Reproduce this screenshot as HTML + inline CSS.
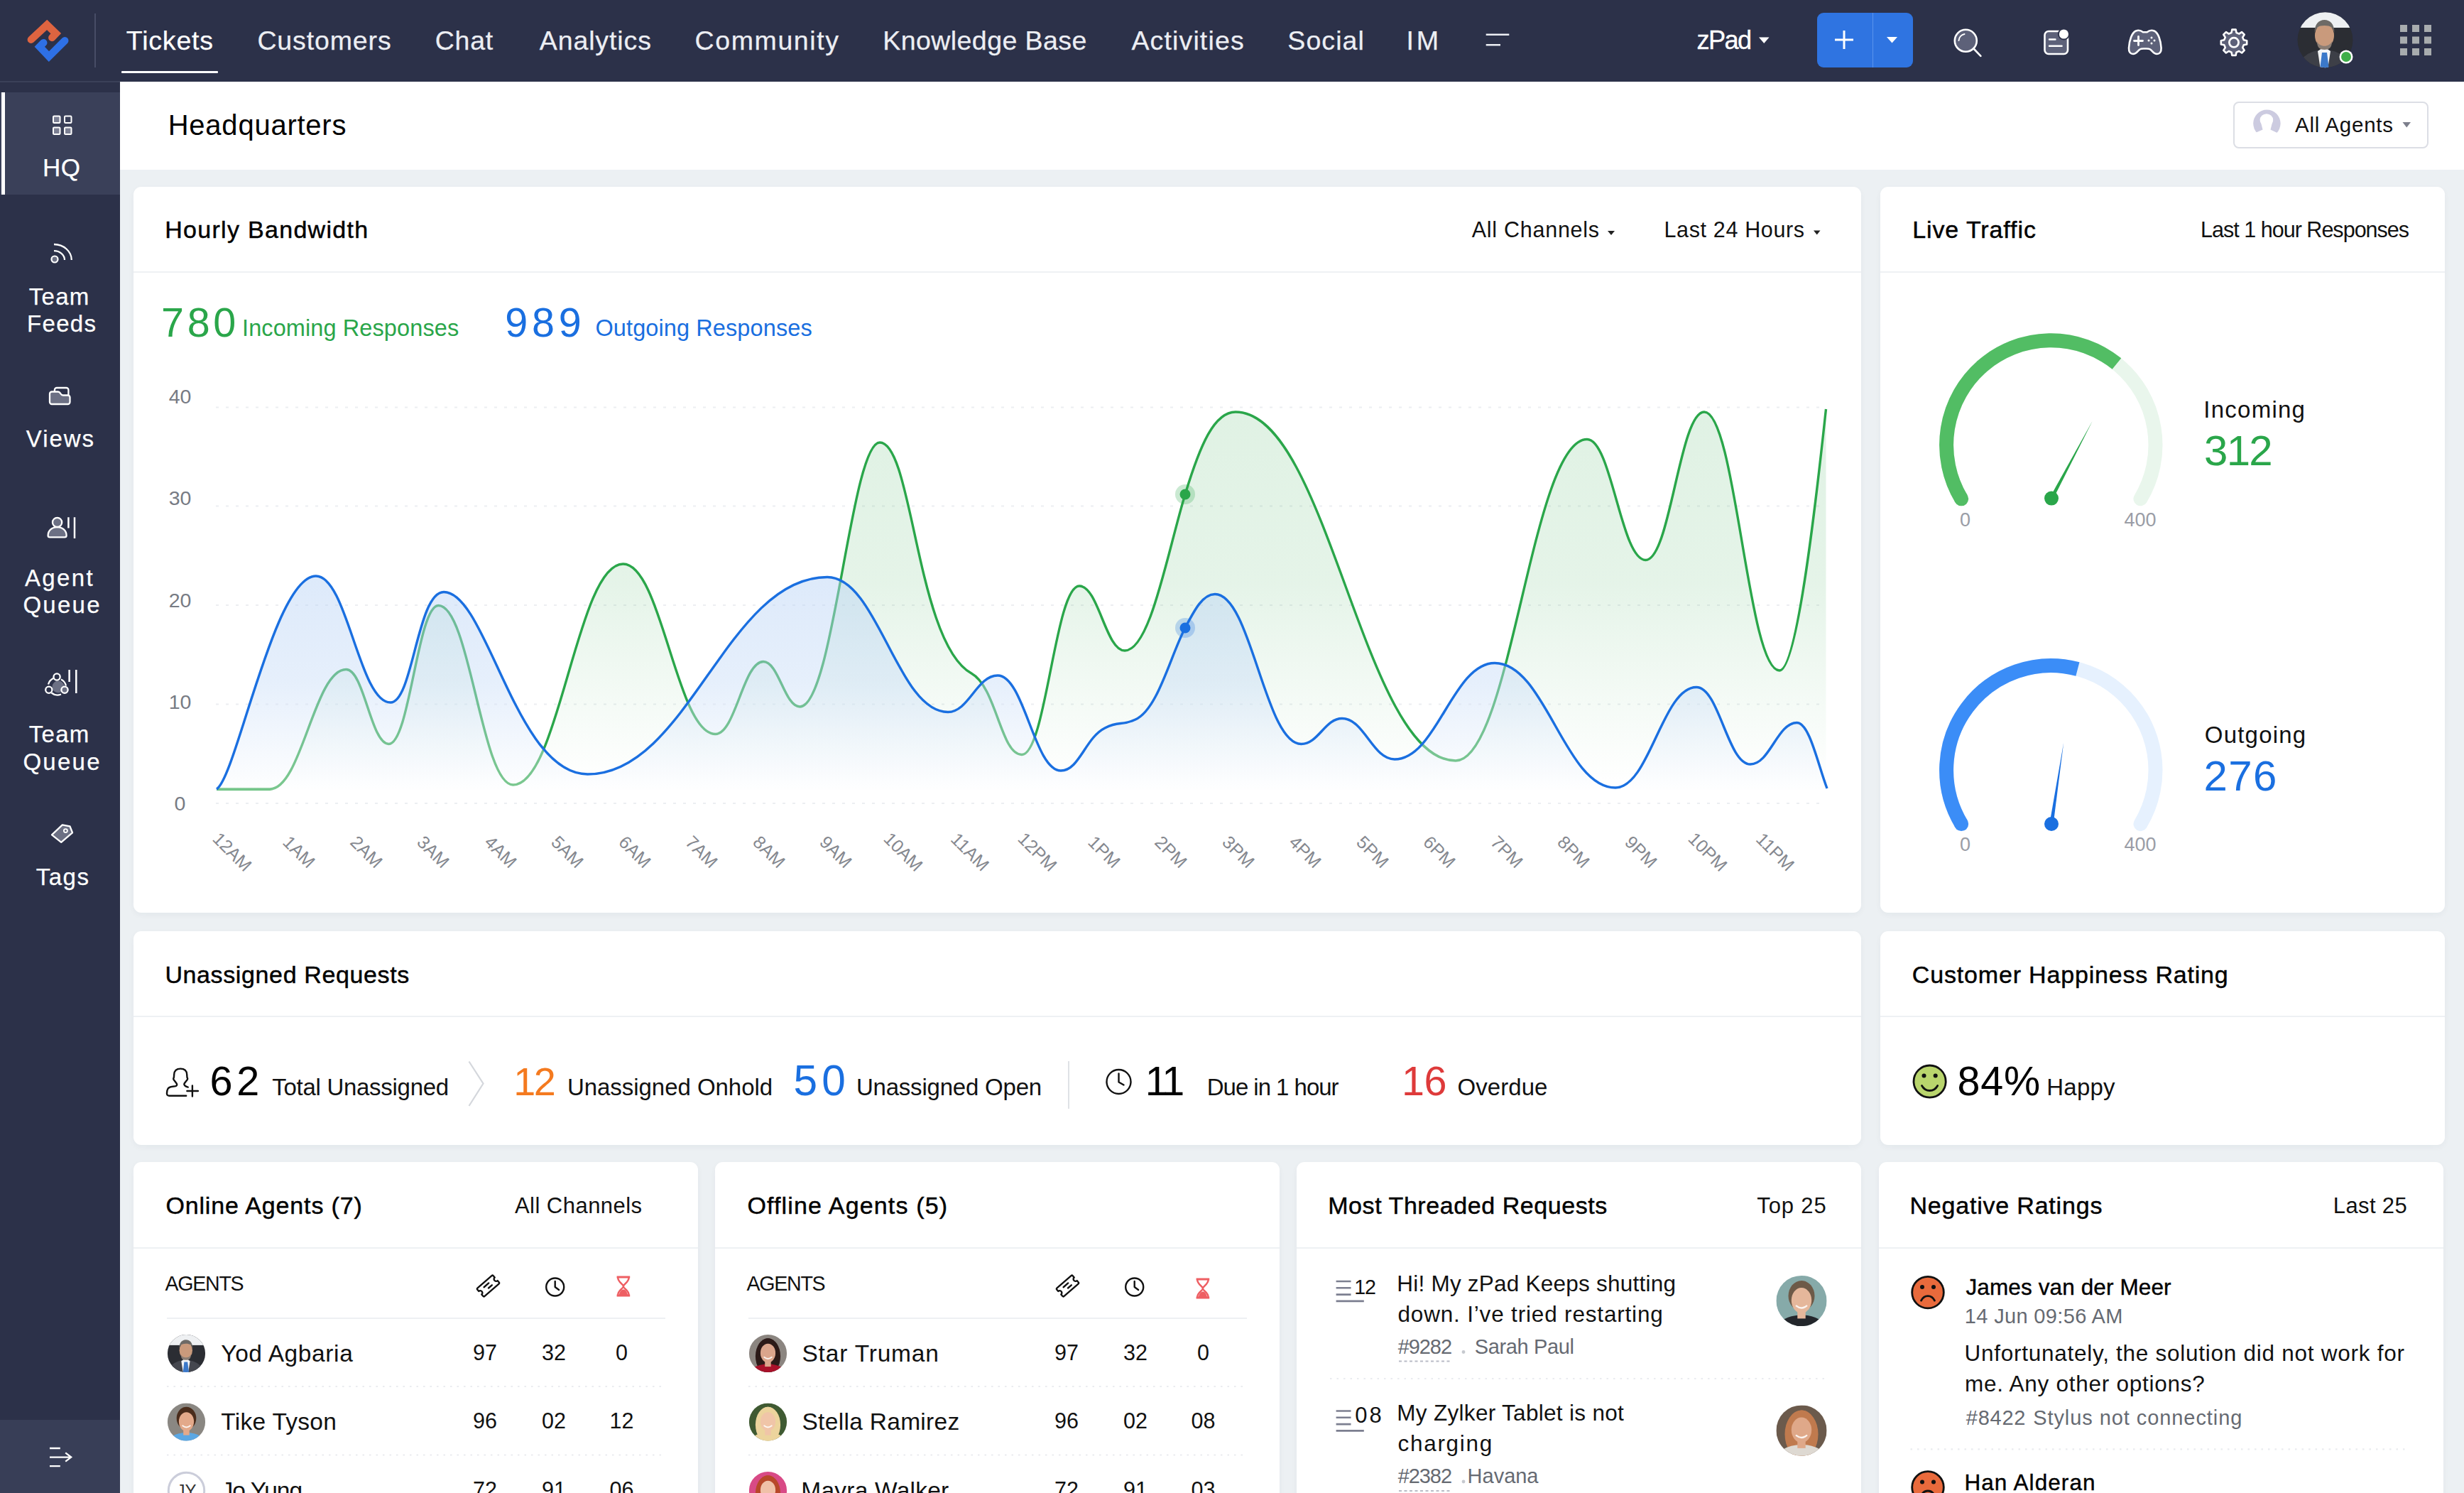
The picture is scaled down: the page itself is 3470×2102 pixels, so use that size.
<!DOCTYPE html>
<html lang="en"><head><meta charset="utf-8"><title>Headquarters</title>
<style>
html,body{margin:0;padding:0;}
body{width:3470px;height:2102px;background:#ecf0f3;position:relative;font-family:"Liberation Sans",sans-serif;}
#page{position:absolute;left:0;top:0;width:3470px;height:2102px;overflow:hidden;}
#page>div{position:absolute;}
.t{position:absolute;white-space:nowrap;line-height:1;}
svg.ov{position:absolute;left:0;top:0;}
</style></head><body><div id="page">
<div style="left:0px;top:0px;width:3470px;height:115px;background:#2c3149;"></div>
<div style="left:0px;top:115px;width:169px;height:1987px;background:#2c3149;"></div>
<div style="left:0px;top:113.5px;width:169px;height:2px;background:#3b4159;"></div>
<div style="left:0px;top:130px;width:169px;height:144px;background:#3a4059;"></div>
<div style="left:2px;top:130px;width:5px;height:144px;background:#fff;"></div>
<div style="left:0px;top:1999px;width:169px;height:103px;background:#383e57;"></div>
<div style="left:169px;top:115px;width:3301px;height:124px;background:#fff;"></div>
<div style="left:188px;top:263px;width:2433px;height:1022px;background:#fff;border-radius:11px;box-shadow:0 3px 8px rgba(30,40,60,0.045);"></div>
<div style="left:2648px;top:263px;width:795px;height:1022px;background:#fff;border-radius:11px;box-shadow:0 3px 8px rgba(30,40,60,0.045);"></div>
<div style="left:188px;top:1311px;width:2433px;height:301px;background:#fff;border-radius:11px;box-shadow:0 3px 8px rgba(30,40,60,0.045);"></div>
<div style="left:2648px;top:1311px;width:795px;height:301px;background:#fff;border-radius:11px;box-shadow:0 3px 8px rgba(30,40,60,0.045);"></div>
<div style="left:188px;top:1636px;width:795px;height:520px;background:#fff;border-radius:11px;box-shadow:0 3px 8px rgba(30,40,60,0.045);"></div>
<div style="left:1007px;top:1636px;width:795px;height:520px;background:#fff;border-radius:11px;box-shadow:0 3px 8px rgba(30,40,60,0.045);"></div>
<div style="left:1826px;top:1636px;width:795px;height:520px;background:#fff;border-radius:11px;box-shadow:0 3px 8px rgba(30,40,60,0.045);"></div>
<div style="left:2646px;top:1636px;width:795px;height:520px;background:#fff;border-radius:11px;box-shadow:0 3px 8px rgba(30,40,60,0.045);"></div>
<div style="left:188px;top:382px;width:2433px;height:2px;background:#eef1f4;"></div>
<div style="left:2648px;top:382px;width:795px;height:2px;background:#eef1f4;"></div>
<div style="left:188px;top:1430px;width:2433px;height:2px;background:#eef1f4;"></div>
<div style="left:2648px;top:1430px;width:795px;height:2px;background:#eef1f4;"></div>
<div style="left:188px;top:1756px;width:795px;height:2px;background:#eef1f4;"></div>
<div style="left:1007px;top:1756px;width:795px;height:2px;background:#eef1f4;"></div>
<div style="left:1826px;top:1756px;width:795px;height:2px;background:#eef1f4;"></div>
<div style="left:2646px;top:1756px;width:795px;height:2px;background:#eef1f4;"></div>
<div style="left:133px;top:19px;width:2px;height:76px;background:#474d66;"></div>
<div style="left:171px;top:100px;width:136px;height:3px;background:#fff;border-radius:1px;"></div>
<div style="left:2559px;top:18px;width:135px;height:77px;background:#2f74e1;border-radius:9px;"></div>
<div style="left:2636.5px;top:18px;width:1.5px;height:77px;background:#5a93ec;"></div>
<div style="left:3145px;top:142.5px;width:275px;height:66px;border:2px solid #dcdee5;border-radius:8px;box-sizing:border-box;background:#fff;"></div>
<div style="left:1504px;top:1494px;width:2px;height:67px;background:#dfe2e6;"></div>
<div style="left:235px;top:1855.3px;width:702px;height:2px;background:#eef0f3;"></div>
<div style="left:1054px;top:1855.3px;width:702px;height:2px;background:#eef0f3;"></div>
<svg class="ov" width="3470" height="2102" viewBox="0 0 3470 2102">
<g fill="none" stroke-linejoin="miter" stroke-linecap="round" stroke-width="10.4"><path d="M43.8 55.8 L66.2 35 L78.8 47.2 L73.3 53" stroke="#de6440"/><path d="M91.3 57.2 L68.9 79.6 L55.8 65.8 L61.3 60.2" stroke="#2e70e6"/></g>
<path d="M2092.7 48.7H2125.3M2092.7 63.3H2113" stroke="#eceef3" stroke-width="2.6" fill="none"/>
<path d="M2477 52.5h14.5l-7.25 8.5z" fill="#fff"/>
<path d="M2584 56H2610M2597 43V69" stroke="#fff" stroke-width="3" fill="none"/>
<path d="M2657 52h15l-7.5 8.6z" fill="#fff"/>
<circle cx="2768.3" cy="57.3" r="15.5" fill="#5d6179" stroke="#fff" stroke-width="2.6"/><path d="M2779.5 68.5L2789.4 78.8" stroke="#fff" stroke-width="2.6" stroke-linecap="round"/><path d="M2758.5 57a10 10 0 0 1 8-9" stroke="#fff" stroke-width="2" fill="none" stroke-linecap="round"/>
<rect x="2879.5" y="44" width="32.5" height="32" rx="5.5" fill="#5d6179" stroke="#fff" stroke-width="2.6"/><path d="M2886 55.5H2894.5M2886 64.8H2903.6" stroke="#fff" stroke-width="2.4" stroke-linecap="round"/><circle cx="2906.4" cy="48" r="8.5" fill="#2c3149"/><circle cx="2906.4" cy="48" r="6.6" fill="#fff"/>
<path d="M3008 43.5c4-1.6 8 .2 10 1.800h5.600c2-1.600 6-3.400 10-1.800 6 2.500 9.500 14 10 24 .3 6-2.500 8.500-6 8.500-4.500 0-6.500-4.500-9.500-6.500-2-1.300-4-1-7.300-1s-5.300-.3-7.300 1c-3 2-5 6.500-9.500 6.500-3.500 0-6.300-2.500-6-8.500.5-10 4-21.500 10-24z" fill="#5d6179" stroke="#fff" stroke-width="2.6" stroke-linejoin="round"/><path d="M3005.500 57.500h12M3011.500 51.500v12" stroke="#fff" stroke-width="2.8" stroke-linecap="round"/><circle cx="3030" cy="53" r="1.500" fill="#fff"/><circle cx="3030" cy="61" r="1.500" fill="#fff"/><circle cx="3026" cy="57" r="1.500" fill="#fff"/><circle cx="3034" cy="57" r="1.500" fill="#fff"/>
<path d="M3142.5 46.0 L3143.4 41.6 L3148.6 41.6 L3149.5 46.0 L3153.2 47.6 L3157.1 45.1 L3160.7 48.7 L3158.2 52.6 L3159.8 56.3 L3164.2 57.2 L3164.2 62.4 L3159.8 63.3 L3158.2 67.0 L3160.7 70.9 L3157.1 74.5 L3153.2 72.0 L3149.5 73.6 L3148.6 78.0 L3143.4 78.0 L3142.5 73.6 L3138.8 72.0 L3134.9 74.5 L3131.3 70.9 L3133.8 67.0 L3132.2 63.3 L3127.8 62.4 L3127.8 57.2 L3132.2 56.3 L3133.8 52.6 L3131.3 48.7 L3134.9 45.1 L3138.8 47.6Z" fill="#5d6179" stroke="#fff" stroke-width="2.6" stroke-linejoin="round"/><circle cx="3146" cy="59.8" r="6.6" fill="#5d6179" stroke="#fff" stroke-width="2.8"/>
<defs><clipPath id="cpn"><circle cx="3274.5" cy="56.3" r="39"/></clipPath></defs><g clip-path="url(#cpn)"><rect x="3235" y="17" width="80" height="80" fill="#2b2d33"/><rect x="3235" y="17" width="80" height="22" fill="#eef0f2"/><ellipse cx="3273" cy="104" rx="40" ry="34" fill="#3d3f47"/><path d="M3264 72l9 -6 9 6 -4 26h-10z" fill="#f3f4f6"/><path d="M3270 74h7l3 24h-13z" fill="#3b78c9"/><ellipse cx="3273.5" cy="50" rx="13.5" ry="17" fill="#c99a7c"/><path d="M3259.500 46c0-12 6-18 14-18s14 6 14 18c-2-7-5-10-14-10s-12 3-14 10z" fill="#6d6a66"/><path d="M3263 58c3 9 18 9 21 0 0 9-4 12-10.500 12s-10.500-3-10.500-12z" fill="#8a7d74"/></g><circle cx="3304" cy="80" r="9.500" fill="#fff"/><circle cx="3304" cy="80" r="7" fill="#3fae49"/>
<rect x="3380" y="35.0" width="10" height="10" fill="#a8acae"/>
<rect x="3397" y="35.0" width="10" height="10" fill="#a8acae"/>
<rect x="3414" y="35.0" width="10" height="10" fill="#a8acae"/>
<rect x="3380" y="51.5" width="10" height="10" fill="#a8acae"/>
<rect x="3397" y="51.5" width="10" height="10" fill="#a8acae"/>
<rect x="3414" y="51.5" width="10" height="10" fill="#a8acae"/>
<rect x="3380" y="68.0" width="10" height="10" fill="#a8acae"/>
<rect x="3397" y="68.0" width="10" height="10" fill="#a8acae"/>
<rect x="3414" y="68.0" width="10" height="10" fill="#a8acae"/>
<rect x="75" y="163.5" width="9.500" height="9.500" rx="1.200" fill="#7b7f93" stroke="#fff" stroke-width="2"/>
<rect x="91" y="163.5" width="9.500" height="9.500" rx="1.200" fill="none" stroke="#fff" stroke-width="2"/>
<rect x="75" y="179.5" width="9.500" height="9.500" rx="1.200" fill="#7b7f93" stroke="#fff" stroke-width="2"/>
<rect x="91" y="179.5" width="9.500" height="9.500" rx="1.200" fill="#7b7f93" stroke="#fff" stroke-width="2"/>
<circle cx="77" cy="365" r="4.500" fill="#6c7084" stroke="#fff" stroke-width="2.200"/><path d="M76 353.200A15 13 0 0 1 91 366M76 344A25 22 0 0 1 100.800 366" fill="none" stroke="#fff" stroke-width="2.300"/>
<path d="M76.900 551.500V549a3 3 0 0 1 3-3h13.500a3 3 0 0 1 3 3v7.300" fill="none" stroke="#fff" stroke-width="2.300"/><path d="M70 554.500a3 3 0 0 1 3-3h8.500c1.500 0 2.200.6 3.200 1.800l1 1.400c1 1.200 1.700 1.800 3.200 1.800h6.600a3 3 0 0 1 3 3v6.500a3 3 0 0 1-3 3H73a3 3 0 0 1-3-3z" fill="#6c7084" stroke="#fff" stroke-width="2.300" stroke-linejoin="round"/>
<path d="M67.600 754c0-7 5.500-11.800 13-11.800s13 4.800 13 11.800c0 1.700-1.200 2.400-2.600 2.400H70.200c-1.400 0-2.600-.7-2.600-2.400z" fill="#6c7084" stroke="#fff" stroke-width="2.300"/><circle cx="80.600" cy="735.400" r="6.600" fill="#6c7084" stroke="#fff" stroke-width="2.300"/><path d="M96.400 728.300V743.600M105 728.300V758" stroke="#fff" stroke-width="2.500" fill="none"/>
<circle cx="82" cy="967" r="8.500" fill="#6c7084"/><path d="M68 963.500A13.500 13.500 0 0 1 75.500 954.800M86 956.500A13.500 13.500 0 0 1 93 965.500M72.500 975.500A13.500 13.500 0 0 0 86 977.500" fill="none" stroke="#fff" stroke-width="2.300"/><circle cx="80.100" cy="953" r="4.600" fill="#2c3149" stroke="#fff" stroke-width="2.300"/><circle cx="68.800" cy="971.300" r="4.600" fill="#2c3149" stroke="#fff" stroke-width="2.300"/><circle cx="91" cy="971.300" r="4.600" fill="#6c7084" stroke="#fff" stroke-width="2.300"/><path d="M97.600 943V960M107.300 943V976" stroke="#fff" stroke-width="2.500" fill="none"/>
<path d="M87.800 1161.300L98.400 1163.300L102 1172.300L86.200 1185.800L73 1175.300Z" fill="#6c7084" stroke="#fff" stroke-width="2.300" stroke-linejoin="round"/><circle cx="92.400" cy="1169.600" r="2.500" fill="#6c7084" stroke="#fff" stroke-width="1.900"/>
<path d="M70 2039H84.800M70 2051.600H99.500M70 2064.200H84.800M92.200 2045.400L100.200 2051.600L92.200 2057.700" stroke="#fff" stroke-width="2.300" fill="none"/>
<circle cx="3192.400" cy="173.800" r="19.200" fill="#cccbe0"/><ellipse cx="3191.900" cy="169" rx="9.300" ry="8.800" fill="#fff"/><path d="M3183.600 171L3200.400 171L3197.400 183.100H3186.600Z" fill="#fff"/><path d="M3186.600 182.600H3197.400L3209.500 188.300V196H3175V187.400Z" fill="#fff"/>
<path d="M3383.500 172h11.500l-5.750 7.500z" fill="#7c7f8c"/>
<path d="M2264 325h10l-5 6z" fill="#222"/>
<path d="M2554 324.500h9.500l-4.750 6z" fill="#222"/>
<path d="M304 573.5H2572" stroke="#eceef1" stroke-width="2" stroke-dasharray="4 10" fill="none"/>
<path d="M304 712.5H2572" stroke="#eceef1" stroke-width="2" stroke-dasharray="4 10" fill="none"/>
<path d="M304 852H2572" stroke="#eceef1" stroke-width="2" stroke-dasharray="4 10" fill="none"/>
<path d="M304 991.5H2572" stroke="#eceef1" stroke-width="2" stroke-dasharray="4 10" fill="none"/>
<path d="M304 1131H2572" stroke="#eceef1" stroke-width="2" stroke-dasharray="4 10" fill="none"/>
<defs><linearGradient id="gg" x1="0" y1="0" x2="0" y2="1" gradientUnits="userSpaceOnUse" gradientTransform="translate(0 570) scale(1 560)"><stop offset="0" stop-color="#2fa64a" stop-opacity="0.15"/><stop offset="0.45" stop-color="#2fa64a" stop-opacity="0.125"/><stop offset="0.95" stop-color="#2fa64a" stop-opacity="0"/></linearGradient><linearGradient id="gb" x1="0" y1="0" x2="0" y2="1" gradientUnits="userSpaceOnUse" gradientTransform="translate(0 800) scale(1 320)"><stop offset="0" stop-color="#1a6fe0" stop-opacity="0.15"/><stop offset="0.5" stop-color="#1a6fe0" stop-opacity="0.11"/><stop offset="1" stop-color="#1a6fe0" stop-opacity="0"/></linearGradient></defs>
<path d="M305.0 1111.0 C336.5 1111.0 348.5 1111.0 380.0 1111.0 C425.1 1111.0 442.4 942.5 487.5 942.5 C512.7 942.5 522.3 1047.5 547.5 1047.5 C576.9 1047.5 588.1 852.5 617.5 852.5 C661.6 852.5 678.4 1105.0 722.5 1105.0 C787.6 1105.0 812.4 794.0 877.5 794.0 C932.1 794.0 952.9 1033.5 1007.5 1033.5 C1035.8 1033.5 1046.7 931.5 1075.0 931.5 C1096.6 931.5 1104.9 995.0 1126.5 995.0 C1173.8 995.0 1198.5 623.0 1239.0 623.0 C1285.4 623.0 1290.6 905.4 1368.0 948.0 C1403.5 967.5 1409.2 1062.5 1439.0 1062.5 C1473.0 1062.5 1486.0 825.0 1520.0 825.0 C1546.9 825.0 1557.1 916.0 1584.0 916.0 C1619.7 916.0 1643.5 780.1 1669.0 696.0 C1690.3 625.7 1710.2 580.0 1740.0 580.0 C1870.2 580.0 1919.8 1071.0 2050.0 1071.0 C2127.7 1071.0 2157.3 618.5 2235.0 618.5 C2269.7 618.5 2282.8 788.5 2317.5 788.5 C2352.2 788.5 2365.3 580.0 2400.0 580.0 C2444.5 580.0 2461.5 944.0 2506.0 944.0 C2533.5 944.0 2563.6 646.7 2571.5 576.0 L2571.500 1112 L305 1112Z" fill="url(#gg)"/>
<path d="M305.0 1111.0 C336.5 1111.0 348.5 1111.0 380.0 1111.0 C425.1 1111.0 442.4 942.5 487.5 942.5 C512.7 942.5 522.3 1047.5 547.5 1047.5 C576.9 1047.5 588.1 852.5 617.5 852.5 C661.6 852.5 678.4 1105.0 722.5 1105.0 C787.6 1105.0 812.4 794.0 877.5 794.0 C932.1 794.0 952.9 1033.5 1007.5 1033.5 C1035.8 1033.5 1046.7 931.5 1075.0 931.5 C1096.6 931.5 1104.9 995.0 1126.5 995.0 C1173.8 995.0 1198.5 623.0 1239.0 623.0 C1285.4 623.0 1290.6 905.4 1368.0 948.0 C1403.5 967.5 1409.2 1062.5 1439.0 1062.5 C1473.0 1062.5 1486.0 825.0 1520.0 825.0 C1546.9 825.0 1557.1 916.0 1584.0 916.0 C1619.7 916.0 1643.5 780.1 1669.0 696.0 C1690.3 625.7 1710.2 580.0 1740.0 580.0 C1870.2 580.0 1919.8 1071.0 2050.0 1071.0 C2127.7 1071.0 2157.3 618.5 2235.0 618.5 C2269.7 618.5 2282.8 788.5 2317.5 788.5 C2352.2 788.5 2365.3 580.0 2400.0 580.0 C2444.5 580.0 2461.5 944.0 2506.0 944.0 C2533.5 944.0 2563.6 646.7 2571.5 576.0" fill="none" stroke="#2aa64a" stroke-width="3.400" stroke-linejoin="round"/>
<path d="M305.0 1111.0 C333.0 1094.2 386.2 811.0 445.0 811.0 C489.1 811.0 505.9 989.0 550.0 989.0 C581.5 989.0 587.5 833.5 625.0 833.5 C685.8 833.5 726.2 1090.0 827.5 1090.0 C969.2 1090.0 1023.2 812.5 1165.0 812.5 C1236.4 812.5 1263.6 1002.5 1335.0 1002.5 C1364.4 1002.5 1375.6 951.0 1405.0 951.0 C1442.4 951.0 1456.6 1085.0 1494.0 1085.0 C1520.0 1085.0 1528.1 1039.0 1556.0 1025.0 C1577.5 1014.2 1577.5 1022.7 1599.0 1013.0 C1630.5 998.8 1648.0 923.9 1669.0 884.0 C1681.6 860.1 1693.4 836.5 1711.0 836.5 C1762.0 836.5 1781.5 1047.5 1832.5 1047.5 C1856.7 1047.5 1865.8 1011.5 1890.0 1011.5 C1921.1 1011.5 1932.9 1069.0 1964.0 1069.0 C2023.2 1069.0 2045.8 933.5 2105.0 933.5 C2176.4 933.5 2203.6 1109.0 2275.0 1109.0 C2322.9 1109.0 2341.1 967.5 2389.0 967.5 C2420.9 967.5 2433.1 1076.0 2465.0 1076.0 C2492.5 1076.0 2503.0 1017.5 2530.5 1017.5 C2548.3 1017.5 2560.2 1076.8 2573.0 1110.0 L2573 1112 L305 1112Z" fill="#fff" fill-opacity="0.38"/>
<path d="M305.0 1111.0 C333.0 1094.2 386.2 811.0 445.0 811.0 C489.1 811.0 505.9 989.0 550.0 989.0 C581.5 989.0 587.5 833.5 625.0 833.5 C685.8 833.5 726.2 1090.0 827.5 1090.0 C969.2 1090.0 1023.2 812.5 1165.0 812.5 C1236.4 812.5 1263.6 1002.5 1335.0 1002.5 C1364.4 1002.5 1375.6 951.0 1405.0 951.0 C1442.4 951.0 1456.6 1085.0 1494.0 1085.0 C1520.0 1085.0 1528.1 1039.0 1556.0 1025.0 C1577.5 1014.2 1577.5 1022.7 1599.0 1013.0 C1630.5 998.8 1648.0 923.9 1669.0 884.0 C1681.6 860.1 1693.4 836.5 1711.0 836.5 C1762.0 836.5 1781.5 1047.5 1832.5 1047.5 C1856.7 1047.5 1865.8 1011.5 1890.0 1011.5 C1921.1 1011.5 1932.9 1069.0 1964.0 1069.0 C2023.2 1069.0 2045.8 933.5 2105.0 933.5 C2176.4 933.5 2203.6 1109.0 2275.0 1109.0 C2322.9 1109.0 2341.1 967.5 2389.0 967.5 C2420.9 967.5 2433.1 1076.0 2465.0 1076.0 C2492.5 1076.0 2503.0 1017.5 2530.5 1017.5 C2548.3 1017.5 2560.2 1076.8 2573.0 1110.0 L2573 1112 L305 1112Z" fill="url(#gb)"/>
<path d="M305.0 1111.0 C333.0 1094.2 386.2 811.0 445.0 811.0 C489.1 811.0 505.9 989.0 550.0 989.0 C581.5 989.0 587.5 833.5 625.0 833.5 C685.8 833.5 726.2 1090.0 827.5 1090.0 C969.2 1090.0 1023.2 812.5 1165.0 812.5 C1236.4 812.5 1263.6 1002.5 1335.0 1002.5 C1364.4 1002.5 1375.6 951.0 1405.0 951.0 C1442.4 951.0 1456.6 1085.0 1494.0 1085.0 C1520.0 1085.0 1528.1 1039.0 1556.0 1025.0 C1577.5 1014.2 1577.5 1022.7 1599.0 1013.0 C1630.5 998.8 1648.0 923.9 1669.0 884.0 C1681.6 860.1 1693.4 836.5 1711.0 836.5 C1762.0 836.5 1781.5 1047.5 1832.5 1047.5 C1856.7 1047.5 1865.8 1011.5 1890.0 1011.5 C1921.1 1011.5 1932.9 1069.0 1964.0 1069.0 C2023.2 1069.0 2045.8 933.5 2105.0 933.5 C2176.4 933.5 2203.6 1109.0 2275.0 1109.0 C2322.9 1109.0 2341.1 967.5 2389.0 967.5 C2420.9 967.5 2433.1 1076.0 2465.0 1076.0 C2492.5 1076.0 2503.0 1017.5 2530.5 1017.5 C2548.3 1017.5 2560.2 1076.8 2573.0 1110.0" fill="none" stroke="#1a6fe0" stroke-width="3.400" stroke-linejoin="round"/>
<circle cx="1669" cy="696" r="14" fill="#2aa64a" fill-opacity="0.25"/><circle cx="1669" cy="696" r="7.500" fill="#2aa64a"/>
<circle cx="1669" cy="884" r="14" fill="#1a6fe0" fill-opacity="0.25"/><circle cx="1669" cy="884" r="7.500" fill="#1a6fe0"/>
<path d="M2762.12 702.31A147.2 147.2 0 1 1 3014.48 702.31" fill="none" stroke="#e9f6ec" stroke-width="20" stroke-linecap="round"/>
<path d="M2762.12 702.31A147.2 147.2 0 0 1 2980.94 512.10" fill="none" stroke="#52bd64" stroke-width="20"/>
<circle cx="2762.12" cy="702.31" r="10" fill="#52bd64"/>
<path d="M2891.3 702.8L2946.9 592.6L2886.7 700.4Z" fill="#2aa64a"/><circle cx="2889" cy="701.6" r="10" fill="#2aa64a"/>
<path d="M2762.12 1160.11A147.2 147.2 0 1 1 3014.48 1160.11" fill="none" stroke="#e6f1fe" stroke-width="20" stroke-linecap="round"/>
<path d="M2762.12 1160.11A147.2 147.2 0 0 1 2925.90 941.98" fill="none" stroke="#3b8df7" stroke-width="20"/>
<circle cx="2762.12" cy="1160.11" r="10" fill="#3b8df7"/>
<path d="M2891.6 1160.4L2906.2 1045.5L2886.4 1159.6Z" fill="#1a6fe0"/><circle cx="2889" cy="1160" r="10" fill="#1a6fe0"/>
<path d="M262.200 1542.800H238.500c-2.500 0-3.700-1.400-3.500-3.800l.4-3.500c.6-3.700 3.500-5.400 7.500-5.700l3.500-.4c2.300-.3 3.400-2 2.300-3.900l-4.100-5.500c-.8-1.200-.4-1.900.3-3.100l.300-4.300c.3-5 3.700-8 9-8s8.700 3 9 8l.3 4.300c.7 1.200 1.100 1.900.3 3.100l-4.100 5.300c-1.200 2.200 1 4.200 5 5.300M263.400 1536H278.900M270.900 1528.500V1543.500" fill="none" stroke="#111" stroke-width="2.400" stroke-linecap="round" stroke-linejoin="round"/>
<path d="M660.500 1494.500L680.500 1525.500L660.500 1557" fill="none" stroke="#d4d7dc" stroke-width="2.200"/>
<circle cx="1575.500" cy="1523" r="17" fill="none" stroke="#111" stroke-width="2.400"/><path d="M1575.500 1511.500V1523.500L1582.500 1527.500" fill="none" stroke="#111" stroke-width="2.400" stroke-linecap="round" stroke-linejoin="round"/>
<circle cx="2717.600" cy="1522.600" r="22.600" fill="#b9d56d" stroke="#111" stroke-width="2.800"/><circle cx="2709.500" cy="1514.500" r="3" fill="#111"/><circle cx="2725.700" cy="1514.500" r="3" fill="#111"/><path d="M2706.500 1528.500c3 5.500 7 7 11.100 7s8.100-1.500 11.100-7" fill="none" stroke="#111" stroke-width="2.800" stroke-linecap="round"/>
<g transform="translate(687.5 1810.5) rotate(-41) scale(0.8)" fill="none" stroke="#111" stroke-width="3" stroke-linejoin="round" stroke-linecap="round"><path d="M-16.500 -9.500H16.500a2 2 0 0 1 2 2V-3.800a3.800 3.800 0 0 0 0 7.600V7.500a2 2 0 0 1 -2 2H-16.500a2 2 0 0 1 -2 -2V3.800a3.800 3.800 0 0 0 0 -7.600V-7.500a2 2 0 0 1 2 -2Z"/><path d="M-7 -3.200H4M-2 3.200H6"/></g>
<circle cx="781.7" cy="1812" r="12.5" fill="none" stroke="#111" stroke-width="2.400"/><path d="M781.7 1804V1812L787.1 1816" fill="none" stroke="#111" stroke-width="2.400" stroke-linecap="round" stroke-linejoin="round"/>
<g fill="none" stroke="#ee5f63" stroke-width="2.400" stroke-linejoin="round"><path d="M868.6 1798H887.1999999999999M868.6 1824H887.1999999999999" stroke-width="2.800"/><path d="M870.1 1798c0 8 7.800 9.500 7.800 13s-7.800 5-7.800 13M885.6999999999999 1798c0 8 -7.800 9.500 -7.800 13s7.800 5 7.800 13"/><path d="M871.6 1824c.8-6 4-8.500 6.300-8.500s5.500 2.500 6.300 8.500z" fill="#ee5f63" stroke="none"/></g>
<defs><clipPath id="av188_0"><circle cx="262.5" cy="1905.5" r="26.6"/></clipPath></defs><g clip-path="url(#av188_0)"><rect x="235.9" y="1878.9" width="53.2" height="53.2" fill="#2b2d33"/><rect x="235.9" y="1878.9" width="53.2" height="15.0" fill="#eef0f2"/><ellipse cx="261.5" cy="1938.0" rx="27.3" ry="23.2" fill="#45474f"/><path d="M255.3 1916.2L261.5 1912.1L267.6 1916.2L264.9 1933.9H258.1Z" fill="#f3f4f6"/><path d="M259.4 1917.6H264.2L266.3 1933.9H257.4Z" fill="#3b78c9"/><ellipse cx="261.8" cy="1901.2" rx="9.2" ry="11.6" fill="#c99a7c"/><path d="M252.3 1898.5C252.3 1890.3 256.4 1886.2 261.8 1886.2S271.4 1890.3 271.4 1898.5C270.0 1893.7 268.0 1891.7 261.8 1891.7S253.6 1893.7 252.3 1898.5Z" fill="#6d6a66"/><path d="M254.7 1906.7C256.7 1912.8 266.9 1912.8 269.0 1906.7C269.0 1912.8 266.3 1914.8 261.8 1914.8S254.7 1912.8 254.7 1906.7Z" fill="#8a7d74"/></g>
<path d="M235 1952.0H937" stroke="#eaecf0" stroke-width="2.200" stroke-dasharray="2.500 7" fill="none"/>
<defs><clipPath id="av188_1"><circle cx="262.5" cy="2002.0" r="26.6"/></clipPath></defs><g clip-path="url(#av188_1)"><rect x="235.9" y="1975.4" width="53.2" height="53.2" fill="#8a8782"/><ellipse cx="262.5" cy="2034.5" rx="27.9" ry="17.6" fill="#5ba7e3"/><rect x="258.2" y="2010.0" width="8.5" height="10.6" fill="#e3a98a"/><ellipse cx="262.5" cy="1996.7" rx="13.8" ry="16.0" fill="#4a2c1b"/><ellipse cx="262.5" cy="2001.5" rx="10.6" ry="13.3" fill="#e3a98a"/><path d="M257.2 2007.3q5.3 4.3 10.6 0" stroke="#fff" stroke-width="1.9" fill="none" stroke-linecap="round" opacity="0.85"/></g>
<path d="M235 2048.5H937" stroke="#eaecf0" stroke-width="2.200" stroke-dasharray="2.500 7" fill="none"/>
<circle cx="262.5" cy="2098.5" r="25.200" fill="#fff" stroke="#cbcdda" stroke-width="3"/>
<g transform="translate(1503.5 1810.5) rotate(-41) scale(0.8)" fill="none" stroke="#111" stroke-width="3" stroke-linejoin="round" stroke-linecap="round"><path d="M-16.500 -9.500H16.500a2 2 0 0 1 2 2V-3.800a3.800 3.800 0 0 0 0 7.600V7.500a2 2 0 0 1 -2 2H-16.500a2 2 0 0 1 -2 -2V3.800a3.800 3.800 0 0 0 0 -7.600V-7.500a2 2 0 0 1 2 -2Z"/><path d="M-7 -3.200H4M-2 3.200H6"/></g>
<circle cx="1597.7" cy="1812" r="12.5" fill="none" stroke="#111" stroke-width="2.400"/><path d="M1597.7 1804V1812L1603.1000000000001 1816" fill="none" stroke="#111" stroke-width="2.400" stroke-linecap="round" stroke-linejoin="round"/>
<g fill="none" stroke="#ee5f63" stroke-width="2.400" stroke-linejoin="round"><path d="M1684.6000000000001 1801H1703.2M1684.6000000000001 1827H1703.2" stroke-width="2.800"/><path d="M1686.1000000000001 1801c0 8 7.800 9.500 7.800 13s-7.800 5-7.800 13M1701.7 1801c0 8 -7.800 9.500 -7.800 13s7.800 5 7.800 13"/><path d="M1687.6000000000001 1827c.8-6 4-8.500 6.300-8.500s5.500 2.500 6.300 8.500z" fill="#ee5f63" stroke="none"/></g>
<defs><clipPath id="av1007_0"><circle cx="1081.5" cy="1905.5" r="26.6"/></clipPath></defs><g clip-path="url(#av1007_0)"><rect x="1054.9" y="1878.9" width="53.2" height="53.2" fill="#8b8580"/><ellipse cx="1081.5" cy="1909.5" rx="17.6" ry="25.3" fill="#2c1a18"/><ellipse cx="1081.5" cy="1938.0" rx="27.9" ry="17.6" fill="#a9112a"/><rect x="1077.2" y="1913.5" width="8.5" height="10.6" fill="#dba58c"/><ellipse cx="1081.5" cy="1900.2" rx="13.8" ry="16.0" fill="#2c1a18"/><ellipse cx="1081.5" cy="1905.0" rx="10.6" ry="13.3" fill="#dba58c"/><path d="M1076.2 1910.8q5.3 4.3 10.6 0" stroke="#fff" stroke-width="1.9" fill="none" stroke-linecap="round" opacity="0.85"/></g>
<path d="M1054 1952.0H1756" stroke="#eaecf0" stroke-width="2.200" stroke-dasharray="2.500 7" fill="none"/>
<defs><clipPath id="av1007_1"><circle cx="1081.5" cy="2002.0" r="26.6"/></clipPath></defs><g clip-path="url(#av1007_1)"><rect x="1054.9" y="1975.4" width="53.2" height="53.2" fill="#3f5a32"/><ellipse cx="1081.5" cy="2006.0" rx="17.6" ry="25.3" fill="#ecd49d"/><ellipse cx="1081.5" cy="2034.5" rx="27.9" ry="17.6" fill="#ecd49d"/><rect x="1077.2" y="2010.0" width="8.5" height="10.6" fill="#f0c5a8"/><ellipse cx="1081.5" cy="1996.7" rx="13.8" ry="16.0" fill="#ecd49d"/><ellipse cx="1081.5" cy="2001.5" rx="10.6" ry="13.3" fill="#f0c5a8"/><path d="M1076.2 2007.3q5.3 4.3 10.6 0" stroke="#fff" stroke-width="1.9" fill="none" stroke-linecap="round" opacity="0.85"/></g>
<path d="M1054 2048.5H1756" stroke="#eaecf0" stroke-width="2.200" stroke-dasharray="2.500 7" fill="none"/>
<defs><clipPath id="av1007_2"><circle cx="1081.5" cy="2098.5" r="26.6"/></clipPath></defs><g clip-path="url(#av1007_2)"><rect x="1054.9" y="2071.9" width="53.2" height="53.2" fill="#d84a86"/><ellipse cx="1081.5" cy="2102.5" rx="17.6" ry="25.3" fill="#b8482a"/><ellipse cx="1081.5" cy="2131.0" rx="27.9" ry="17.6" fill="#e8e0dc"/><rect x="1077.2" y="2106.5" width="8.5" height="10.6" fill="#f0c1a8"/><ellipse cx="1081.5" cy="2093.2" rx="13.8" ry="16.0" fill="#b8482a"/><ellipse cx="1081.5" cy="2098.0" rx="10.6" ry="13.3" fill="#f0c1a8"/><path d="M1076.2 2103.8q5.3 4.3 10.6 0" stroke="#fff" stroke-width="1.9" fill="none" stroke-linecap="round" opacity="0.85"/></g>
<path d="M1881.600 1804H1902.500M1881.600 1813.3H1902.500M1881.600 1822.6H1902.500M1881.600 1831.9H1920.800" stroke="#7c7f90" stroke-width="2.600" fill="none"/>
<path d="M1970 1916.5H2044" stroke="#b9bcc6" stroke-width="2" stroke-dasharray="4 3.500" fill="none"/>
<circle cx="2061" cy="1903.5" r="2.400" fill="#c6c9cf"/>
<defs><clipPath id="avm1"><circle cx="2537" cy="1831.5" r="35.6"/></clipPath></defs><g clip-path="url(#avm1)"><rect x="2501.4" y="1795.9" width="71.2" height="71.2" fill="#86aaa9"/><ellipse cx="2537" cy="1874.9" rx="37.4" ry="23.5" fill="#23262b"/><rect x="2531.3" y="1842.2" width="11.4" height="14.2" fill="#e5b79b"/><ellipse cx="2537" cy="1824.4" rx="18.5" ry="21.4" fill="#6d5a48"/><ellipse cx="2537" cy="1830.8" rx="14.2" ry="17.8" fill="#e5b79b"/><path d="M2529.9 1838.6q7.1 5.7 14.2 0" stroke="#fff" stroke-width="2.5" fill="none" stroke-linecap="round" opacity="0.85"/></g>
<path d="M1873 1941H2575" stroke="#eaecf0" stroke-width="2.200" stroke-dasharray="2.500 7" fill="none"/>
<path d="M1881.600 1986.5H1902.500M1881.600 1995.8H1902.500M1881.600 2005.1H1902.500M1881.600 2014.4H1920.800" stroke="#7c7f90" stroke-width="2.600" fill="none"/>
<path d="M1970 2099.0H2044" stroke="#b9bcc6" stroke-width="2" stroke-dasharray="4 3.500" fill="none"/>
<circle cx="2061" cy="2086.0" r="2.400" fill="#c6c9cf"/>
<defs><clipPath id="avm2"><circle cx="2537" cy="2014.0" r="35.6"/></clipPath></defs><g clip-path="url(#avm2)"><rect x="2501.4" y="1978.4" width="71.2" height="71.2" fill="#6b5a4c"/><ellipse cx="2537" cy="2019.3" rx="23.5" ry="33.8" fill="#c07a4e"/><ellipse cx="2537" cy="2057.4" rx="37.4" ry="23.5" fill="#ded9d2"/><rect x="2531.3" y="2024.7" width="11.4" height="14.2" fill="#dfa889"/><ellipse cx="2537" cy="2006.9" rx="18.5" ry="21.4" fill="#c07a4e"/><ellipse cx="2537" cy="2013.3" rx="14.2" ry="17.8" fill="#dfa889"/><path d="M2529.9 2021.1q7.1 5.7 14.2 0" stroke="#fff" stroke-width="2.5" fill="none" stroke-linecap="round" opacity="0.85"/></g>
<circle cx="2715" cy="1819.6" r="22.300" fill="#e96a3c" stroke="#111" stroke-width="2.800"/><circle cx="2707" cy="1812.1" r="3" fill="#111"/><circle cx="2723" cy="1812.1" r="3" fill="#111"/><path d="M2705.5 1831.1c2.500-5 6-6.500 9.500-6.500s7 1.500 9.500 6.500" fill="none" stroke="#111" stroke-width="2.800" stroke-linecap="round"/>
<path d="M2690.500 2040.300H3389.500" stroke="#eaecf0" stroke-width="2.200" stroke-dasharray="2.500 7" fill="none"/>
<circle cx="2715" cy="2094" r="22.300" fill="#e96a3c" stroke="#111" stroke-width="2.800"/><circle cx="2707" cy="2086.5" r="3" fill="#111"/><circle cx="2723" cy="2086.5" r="3" fill="#111"/><path d="M2705.5 2105.5c2.500-5 6-6.500 9.500-6.500s7 1.500 9.500 6.500" fill="none" stroke="#111" stroke-width="2.800" stroke-linecap="round"/>
</svg>
<span class="t" id="t0" style="font-size:37.5px;top:39.06px;color:#fff;letter-spacing:0.804px;-webkit-text-stroke:0.25px #fff;left:177.86px;">Tickets</span>
<span class="t" id="t1" style="font-size:37.5px;top:39.06px;color:#eceef3;letter-spacing:0.870px;-webkit-text-stroke:0.25px #eceef3;left:362.40px;">Customers</span>
<span class="t" id="t2" style="font-size:37.5px;top:39.06px;color:#eceef3;letter-spacing:0.787px;-webkit-text-stroke:0.25px #eceef3;left:612.70px;">Chat</span>
<span class="t" id="t3" style="font-size:37.5px;top:39.06px;color:#eceef3;letter-spacing:0.896px;-webkit-text-stroke:0.25px #eceef3;left:759.73px;">Analytics</span>
<span class="t" id="t4" style="font-size:37.5px;top:39.06px;color:#eceef3;letter-spacing:1.619px;-webkit-text-stroke:0.25px #eceef3;left:978.50px;">Community</span>
<span class="t" id="t5" style="font-size:37.5px;top:39.06px;color:#eceef3;letter-spacing:0.438px;-webkit-text-stroke:0.25px #eceef3;left:1243.22px;">Knowledge Base</span>
<span class="t" id="t6" style="font-size:37.5px;top:39.06px;color:#eceef3;letter-spacing:1.142px;-webkit-text-stroke:0.25px #eceef3;left:1593.43px;">Activities</span>
<span class="t" id="t7" style="font-size:37.5px;top:39.06px;color:#eceef3;letter-spacing:1.094px;-webkit-text-stroke:0.25px #eceef3;left:1813.30px;">Social</span>
<span class="t" id="t8" style="font-size:37.61px;top:38.96px;color:#eceef3;letter-spacing:3.761px;-webkit-text-stroke:0.25px #eceef3;left:1980.53px;">IM</span>
<span class="t" id="t9" style="font-size:36.28px;top:39.09px;color:#fff;letter-spacing:-1.633px;-webkit-text-stroke:0.3px #fff;left:2389.53px;">zPad</span>
<span class="t" id="t10" style="font-size:35px;top:218.37px;color:#fff;letter-spacing:0.546px;-webkit-text-stroke:0.25px #fff;left:-413.50px;width:1000px;text-align:center;text-indent:0.546px;">HQ</span>
<span class="t" id="t11" style="font-size:33px;top:400.77px;color:#fff;letter-spacing:1.338px;-webkit-text-stroke:0.25px #fff;left:-417.00px;width:1000px;text-align:center;text-indent:1.338px;">Team</span>
<span class="t" id="t12" style="font-size:33px;top:439.07px;color:#fff;letter-spacing:1.295px;-webkit-text-stroke:0.25px #fff;left:-413.50px;width:1000px;text-align:center;text-indent:1.295px;">Feeds</span>
<span class="t" id="t13" style="font-size:33px;top:601.07px;color:#fff;letter-spacing:1.925px;-webkit-text-stroke:0.25px #fff;left:-415.60px;width:1000px;text-align:center;text-indent:1.925px;">Views</span>
<span class="t" id="t14" style="font-size:33px;top:796.57px;color:#fff;letter-spacing:2.389px;-webkit-text-stroke:0.25px #fff;left:-417.20px;width:1000px;text-align:center;text-indent:2.389px;">Agent</span>
<span class="t" id="t15" style="font-size:33px;top:835.07px;color:#fff;letter-spacing:2.234px;-webkit-text-stroke:0.25px #fff;left:-413.50px;width:1000px;text-align:center;text-indent:2.234px;">Queue</span>
<span class="t" id="t16" style="font-size:33px;top:1016.87px;color:#fff;letter-spacing:1.338px;-webkit-text-stroke:0.25px #fff;left:-417.00px;width:1000px;text-align:center;text-indent:1.338px;">Team</span>
<span class="t" id="t17" style="font-size:33px;top:1055.67px;color:#fff;letter-spacing:2.234px;-webkit-text-stroke:0.25px #fff;left:-413.50px;width:1000px;text-align:center;text-indent:2.234px;">Queue</span>
<span class="t" id="t18" style="font-size:33px;top:1217.87px;color:#fff;letter-spacing:1.538px;-webkit-text-stroke:0.25px #fff;left:-412.20px;width:1000px;text-align:center;text-indent:1.538px;">Tags</span>
<span class="t" id="t19" style="font-size:40px;top:156.14px;color:#000;letter-spacing:0.759px;left:236.72px;">Headquarters</span>
<span class="t" id="t20" style="font-size:29.5px;top:161.23px;color:#111;letter-spacing:0.769px;left:3231.94px;">All Agents</span>
<span class="t" id="t21" style="font-size:34px;top:306.22px;color:#000;letter-spacing:1.301px;-webkit-text-stroke:0.45px #000;left:232.21px;">Hourly Bandwidth</span>
<span class="t" id="t22" style="font-size:30.5px;top:308.38px;color:#111;letter-spacing:0.747px;left:2072.64px;">All Channels</span>
<span class="t" id="t23" style="font-size:30.5px;top:308.18px;color:#111;letter-spacing:0.643px;left:2343.50px;">Last 24 Hours</span>
<span class="t" id="t24" style="font-size:57.5px;top:426.33px;color:#2aa64a;letter-spacing:4.628px;left:227.05px;">780</span>
<span class="t" id="t25" style="font-size:32.5px;top:446.49px;color:#2aa64a;letter-spacing:0.098px;left:341.00px;">Incoming Responses</span>
<span class="t" id="t26" style="font-size:57.5px;top:426.33px;color:#1a6fe0;letter-spacing:5.741px;left:711.30px;">989</span>
<span class="t" id="t27" style="font-size:32.5px;top:446.49px;color:#1a6fe0;letter-spacing:0.099px;left:838.46px;">Outgoing Responses</span>
<span class="t" id="t28" style="font-size:28.5px;top:544.37px;color:#777b84;left:-246.50px;width:1000px;text-align:center;">40</span>
<span class="t" id="t29" style="font-size:28.5px;top:687.37px;color:#777b84;left:-246.50px;width:1000px;text-align:center;">30</span>
<span class="t" id="t30" style="font-size:28.5px;top:830.87px;color:#777b84;left:-246.50px;width:1000px;text-align:center;">20</span>
<span class="t" id="t31" style="font-size:28.5px;top:974.37px;color:#777b84;left:-246.50px;width:1000px;text-align:center;">10</span>
<span class="t" id="t32" style="font-size:28.5px;top:1116.87px;color:#777b84;left:-246.50px;width:1000px;text-align:center;">0</span>
<span class="t" id="t33" style="font-size:25px;top:1186.54px;color:#85888f;left:-173.00px;width:1000px;text-align:center;transform:rotate(45deg);transform-origin:50% 50%;">12AM</span>
<span class="t" id="t34" style="font-size:25px;top:1186.54px;color:#85888f;left:-78.54px;width:1000px;text-align:center;transform:rotate(45deg);transform-origin:50% 50%;">1AM</span>
<span class="t" id="t35" style="font-size:25px;top:1186.54px;color:#85888f;left:15.92px;width:1000px;text-align:center;transform:rotate(45deg);transform-origin:50% 50%;">2AM</span>
<span class="t" id="t36" style="font-size:25px;top:1186.54px;color:#85888f;left:110.38px;width:1000px;text-align:center;transform:rotate(45deg);transform-origin:50% 50%;">3AM</span>
<span class="t" id="t37" style="font-size:25px;top:1186.54px;color:#85888f;left:204.84px;width:1000px;text-align:center;transform:rotate(45deg);transform-origin:50% 50%;">4AM</span>
<span class="t" id="t38" style="font-size:25px;top:1186.54px;color:#85888f;left:299.30px;width:1000px;text-align:center;transform:rotate(45deg);transform-origin:50% 50%;">5AM</span>
<span class="t" id="t39" style="font-size:25px;top:1186.54px;color:#85888f;left:393.76px;width:1000px;text-align:center;transform:rotate(45deg);transform-origin:50% 50%;">6AM</span>
<span class="t" id="t40" style="font-size:25px;top:1186.54px;color:#85888f;left:488.22px;width:1000px;text-align:center;transform:rotate(45deg);transform-origin:50% 50%;">7AM</span>
<span class="t" id="t41" style="font-size:25px;top:1186.54px;color:#85888f;left:582.68px;width:1000px;text-align:center;transform:rotate(45deg);transform-origin:50% 50%;">8AM</span>
<span class="t" id="t42" style="font-size:25px;top:1186.54px;color:#85888f;left:677.14px;width:1000px;text-align:center;transform:rotate(45deg);transform-origin:50% 50%;">9AM</span>
<span class="t" id="t43" style="font-size:25px;top:1186.54px;color:#85888f;left:771.60px;width:1000px;text-align:center;transform:rotate(45deg);transform-origin:50% 50%;">10AM</span>
<span class="t" id="t44" style="font-size:25px;top:1186.54px;color:#85888f;left:866.06px;width:1000px;text-align:center;transform:rotate(45deg);transform-origin:50% 50%;">11AM</span>
<span class="t" id="t45" style="font-size:25px;top:1186.54px;color:#85888f;left:960.52px;width:1000px;text-align:center;transform:rotate(45deg);transform-origin:50% 50%;">12PM</span>
<span class="t" id="t46" style="font-size:25px;top:1186.54px;color:#85888f;left:1054.98px;width:1000px;text-align:center;transform:rotate(45deg);transform-origin:50% 50%;">1PM</span>
<span class="t" id="t47" style="font-size:25px;top:1186.54px;color:#85888f;left:1149.44px;width:1000px;text-align:center;transform:rotate(45deg);transform-origin:50% 50%;">2PM</span>
<span class="t" id="t48" style="font-size:25px;top:1186.54px;color:#85888f;left:1243.90px;width:1000px;text-align:center;transform:rotate(45deg);transform-origin:50% 50%;">3PM</span>
<span class="t" id="t49" style="font-size:25px;top:1186.54px;color:#85888f;left:1338.36px;width:1000px;text-align:center;transform:rotate(45deg);transform-origin:50% 50%;">4PM</span>
<span class="t" id="t50" style="font-size:25px;top:1186.54px;color:#85888f;left:1432.82px;width:1000px;text-align:center;transform:rotate(45deg);transform-origin:50% 50%;">5PM</span>
<span class="t" id="t51" style="font-size:25px;top:1186.54px;color:#85888f;left:1527.28px;width:1000px;text-align:center;transform:rotate(45deg);transform-origin:50% 50%;">6PM</span>
<span class="t" id="t52" style="font-size:25px;top:1186.54px;color:#85888f;left:1621.74px;width:1000px;text-align:center;transform:rotate(45deg);transform-origin:50% 50%;">7PM</span>
<span class="t" id="t53" style="font-size:25px;top:1186.54px;color:#85888f;left:1716.20px;width:1000px;text-align:center;transform:rotate(45deg);transform-origin:50% 50%;">8PM</span>
<span class="t" id="t54" style="font-size:25px;top:1186.54px;color:#85888f;left:1810.66px;width:1000px;text-align:center;transform:rotate(45deg);transform-origin:50% 50%;">9PM</span>
<span class="t" id="t55" style="font-size:25px;top:1186.54px;color:#85888f;left:1905.12px;width:1000px;text-align:center;transform:rotate(45deg);transform-origin:50% 50%;">10PM</span>
<span class="t" id="t56" style="font-size:25px;top:1186.54px;color:#85888f;left:1999.58px;width:1000px;text-align:center;transform:rotate(45deg);transform-origin:50% 50%;">11PM</span>
<span class="t" id="t57" style="font-size:34px;top:306.22px;color:#000;letter-spacing:0.900px;-webkit-text-stroke:0.45px #000;left:2693.21px;">Live Traffic</span>
<span class="t" id="t58" style="font-size:30.5px;top:307.98px;color:#111;letter-spacing:-0.978px;left:3099.00px;">Last 1 hour Responses</span>
<span class="t" id="t59" style="font-size:27px;top:718.64px;color:#9a9da6;left:2267.50px;width:1000px;text-align:center;">0</span>
<span class="t" id="t60" style="font-size:27px;top:718.64px;color:#9a9da6;left:2514.00px;width:1000px;text-align:center;">400</span>
<span class="t" id="t61" style="font-size:27px;top:1176.44px;color:#9a9da6;left:2267.50px;width:1000px;text-align:center;">0</span>
<span class="t" id="t62" style="font-size:27px;top:1176.44px;color:#9a9da6;left:2514.00px;width:1000px;text-align:center;">400</span>
<span class="t" id="t63" style="font-size:33px;top:559.77px;color:#111;letter-spacing:1.238px;left:3103.35px;">Incoming</span>
<span class="t" id="t64" style="font-size:60px;top:605.21px;color:#2aa64a;letter-spacing:-1.803px;left:3104.11px;">312</span>
<span class="t" id="t65" style="font-size:33px;top:1017.57px;color:#111;letter-spacing:1.193px;left:3104.84px;">Outgoing</span>
<span class="t" id="t66" style="font-size:60px;top:1062.51px;color:#1a6fe0;letter-spacing:1.472px;left:3103.38px;">276</span>
<span class="t" id="t67" style="font-size:34px;top:1355.22px;color:#000;letter-spacing:0.622px;-webkit-text-stroke:0.45px #000;left:232.38px;">Unassigned Requests</span>
<span class="t" id="t68" style="font-size:57.58px;top:1493.76px;color:#000;letter-spacing:5.758px;left:295.58px;">62</span>
<span class="t" id="t69" style="font-size:33px;top:1513.57px;color:#111;letter-spacing:-0.286px;left:383.26px;">Total Unassigned</span>
<span class="t" id="t70" style="font-size:55.79px;top:1495.27px;color:#f47a1f;letter-spacing:-2.511px;left:723.25px;">12</span>
<span class="t" id="t71" style="font-size:33px;top:1513.57px;color:#111;letter-spacing:-0.044px;left:798.95px;">Unassigned Onhold</span>
<span class="t" id="t72" style="font-size:60.44px;top:1491.34px;color:#1a6fe0;letter-spacing:6.044px;left:1117.58px;">50</span>
<span class="t" id="t73" style="font-size:33px;top:1513.57px;color:#111;letter-spacing:-0.214px;left:1205.95px;">Unassigned Open</span>
<span class="t" id="t74" style="font-size:57.5px;top:1493.83px;color:#000;left:1140.50px;width:1000px;text-align:center;letter-spacing:-4px;text-indent:-4px;">11</span>
<span class="t" id="t75" style="font-size:33px;top:1513.57px;color:#111;letter-spacing:-1.032px;left:1699.79px;">Due in 1 hour</span>
<span class="t" id="t76" style="font-size:57.5px;top:1493.83px;color:#de3a3a;letter-spacing:-0.562px;left:1974.12px;">16</span>
<span class="t" id="t77" style="font-size:33px;top:1513.57px;color:#111;letter-spacing:0.075px;left:2052.44px;">Overdue</span>
<span class="t" id="t78" style="font-size:34px;top:1354.72px;color:#000;letter-spacing:0.821px;-webkit-text-stroke:0.45px #000;left:2692.87px;">Customer Happiness Rating</span>
<span class="t" id="t79" style="font-size:57.5px;top:1494.33px;color:#000;letter-spacing:0.727px;left:2756.50px;">84%</span>
<span class="t" id="t80" style="font-size:33px;top:1514.37px;color:#111;letter-spacing:0.220px;left:2882.29px;">Happy</span>
<span class="t" id="t81" style="font-size:34px;top:1680.22px;color:#000;letter-spacing:0.863px;-webkit-text-stroke:0.45px #000;left:233.39px;">Online Agents (7)</span>
<span class="t" id="t82" style="font-size:31px;top:1682.26px;color:#111;letter-spacing:0.467px;left:724.94px;">All Channels</span>
<span class="t" id="t83" style="font-size:28.6px;top:1792.79px;color:#111;letter-spacing:-1.287px;left:232.54px;">AGENTS</span>
<span class="t" id="t84" style="font-size:33.5px;top:1888.54px;color:#111;letter-spacing:0.607px;left:311.26px;">Yod Agbaria</span>
<span class="t" id="t85" style="font-size:30.5px;top:1888.68px;color:#111;left:183.00px;width:1000px;text-align:center;">97</span>
<span class="t" id="t86" style="font-size:30.5px;top:1888.68px;color:#111;left:280.00px;width:1000px;text-align:center;">32</span>
<span class="t" id="t87" style="font-size:30.5px;top:1888.68px;color:#111;left:375.50px;width:1000px;text-align:center;">0</span>
<span class="t" id="t88" style="font-size:33.5px;top:1985.04px;color:#111;letter-spacing:0.278px;left:311.25px;">Tike Tyson</span>
<span class="t" id="t89" style="font-size:30.5px;top:1985.18px;color:#111;left:183.00px;width:1000px;text-align:center;">96</span>
<span class="t" id="t90" style="font-size:30.5px;top:1985.18px;color:#111;left:280.00px;width:1000px;text-align:center;">02</span>
<span class="t" id="t91" style="font-size:30.5px;top:1985.18px;color:#111;left:375.50px;width:1000px;text-align:center;">12</span>
<span class="t" id="t92" style="font-size:24px;top:2087.18px;color:#333;left:-237.50px;width:1000px;text-align:center;">JY</span>
<span class="t" id="t93" style="font-size:33.5px;top:2081.54px;color:#111;letter-spacing:-0.967px;left:311.48px;">Jo Yung</span>
<span class="t" id="t94" style="font-size:30.5px;top:2081.68px;color:#111;left:183.00px;width:1000px;text-align:center;">72</span>
<span class="t" id="t95" style="font-size:30.5px;top:2081.68px;color:#111;left:280.00px;width:1000px;text-align:center;">91</span>
<span class="t" id="t96" style="font-size:30.5px;top:2081.68px;color:#111;left:375.50px;width:1000px;text-align:center;">06</span>
<span class="t" id="t97" style="font-size:34px;top:1680.22px;color:#000;letter-spacing:1.155px;-webkit-text-stroke:0.45px #000;left:1052.39px;">Offline Agents (5)</span>
<span class="t" id="t98" style="font-size:28.6px;top:1792.79px;color:#111;letter-spacing:-1.287px;left:1051.54px;">AGENTS</span>
<span class="t" id="t99" style="font-size:33.5px;top:1888.54px;color:#111;letter-spacing:0.807px;left:1129.48px;">Star Truman</span>
<span class="t" id="t100" style="font-size:30.5px;top:1888.68px;color:#111;left:1002.00px;width:1000px;text-align:center;">97</span>
<span class="t" id="t101" style="font-size:30.5px;top:1888.68px;color:#111;left:1099.00px;width:1000px;text-align:center;">32</span>
<span class="t" id="t102" style="font-size:30.5px;top:1888.68px;color:#111;left:1194.50px;width:1000px;text-align:center;">0</span>
<span class="t" id="t103" style="font-size:33.5px;top:1985.04px;color:#111;letter-spacing:0.305px;left:1129.48px;">Stella Ramirez</span>
<span class="t" id="t104" style="font-size:30.5px;top:1985.18px;color:#111;left:1002.00px;width:1000px;text-align:center;">96</span>
<span class="t" id="t105" style="font-size:30.5px;top:1985.18px;color:#111;left:1099.00px;width:1000px;text-align:center;">02</span>
<span class="t" id="t106" style="font-size:30.5px;top:1985.18px;color:#111;left:1194.50px;width:1000px;text-align:center;">08</span>
<span class="t" id="t107" style="font-size:33.5px;top:2081.54px;color:#111;letter-spacing:0.239px;left:1128.25px;">Mayra Walker</span>
<span class="t" id="t108" style="font-size:30.5px;top:2081.68px;color:#111;left:1002.00px;width:1000px;text-align:center;">72</span>
<span class="t" id="t109" style="font-size:30.5px;top:2081.68px;color:#111;left:1099.00px;width:1000px;text-align:center;">91</span>
<span class="t" id="t110" style="font-size:30.5px;top:2081.68px;color:#111;left:1194.50px;width:1000px;text-align:center;">03</span>
<span class="t" id="t111" style="font-size:34px;top:1680.22px;color:#000;letter-spacing:0.566px;-webkit-text-stroke:0.45px #000;left:1870.21px;">Most Threaded Requests</span>
<span class="t" id="t112" style="font-size:31px;top:1682.26px;color:#111;letter-spacing:0.864px;left:2474.30px;">Top 25</span>
<span class="t" id="t113" style="font-size:28.68px;top:1797.72px;color:#111;letter-spacing:-1.291px;left:1907.32px;">12</span>
<span class="t" id="t114" style="font-size:31.5px;top:1791.94px;color:#111;letter-spacing:0.235px;left:1967.22px;">Hi! My zPad Keeps shutting</span>
<span class="t" id="t115" style="font-size:31.5px;top:1834.94px;color:#111;letter-spacing:0.824px;left:1968.48px;">down. I’ve tried restarting</span>
<span class="t" id="t116" style="font-size:29px;top:1881.65px;color:#666a72;letter-spacing:-1.068px;left:1968.67px;">#9282</span>
<span class="t" id="t117" style="font-size:29px;top:1881.65px;color:#666a72;letter-spacing:-0.360px;left:2076.68px;">Sarah Paul</span>
<span class="t" id="t118" style="font-size:30.97px;top:1978.28px;color:#111;letter-spacing:3.097px;left:1908.29px;">08</span>
<span class="t" id="t119" style="font-size:31.5px;top:1974.44px;color:#111;letter-spacing:0.311px;left:1967.22px;">My Zylker Tablet is not</span>
<span class="t" id="t120" style="font-size:31.5px;top:2017.44px;color:#111;letter-spacing:1.718px;left:1968.46px;">charging</span>
<span class="t" id="t121" style="font-size:29px;top:2064.15px;color:#666a72;letter-spacing:-1.068px;left:1968.67px;">#2382</span>
<span class="t" id="t122" style="font-size:29px;top:2064.15px;color:#666a72;letter-spacing:-0.018px;left:2066.62px;">Havana</span>
<span class="t" id="t123" style="font-size:34px;top:1680.22px;color:#000;letter-spacing:0.806px;-webkit-text-stroke:0.45px #000;left:2689.41px;">Negative Ratings</span>
<span class="t" id="t124" style="font-size:31px;top:1682.26px;color:#111;letter-spacing:0.357px;left:3285.86px;">Last 25</span>
<span class="t" id="t125" style="font-size:31.5px;top:1797.34px;color:#000;letter-spacing:0.111px;-webkit-text-stroke:0.4px #000;left:2768.51px;">James van der Meer</span>
<span class="t" id="t126" style="font-size:29px;top:1838.65px;color:#666a72;letter-spacing:0.352px;left:2766.79px;">14 Jun 09:56 AM</span>
<span class="t" id="t127" style="font-size:31.5px;top:1889.64px;color:#111;letter-spacing:0.735px;left:2766.57px;">Unfortunately, the solution did not work for</span>
<span class="t" id="t128" style="font-size:31.5px;top:1932.74px;color:#111;letter-spacing:0.741px;left:2766.91px;">me. Any other options?</span>
<span class="t" id="t129" style="font-size:29px;top:1981.75px;color:#666a72;letter-spacing:0.732px;left:2768.87px;">#8422</span>
<span class="t" id="t130" style="font-size:29px;top:1981.75px;color:#666a72;letter-spacing:0.926px;left:2863.18px;">Stylus not connecting</span>
<span class="t" id="t131" style="font-size:31.5px;top:2071.84px;color:#000;letter-spacing:1.075px;-webkit-text-stroke:0.4px #000;left:2766.42px;">Han Alderan</span>
</div></body></html>
